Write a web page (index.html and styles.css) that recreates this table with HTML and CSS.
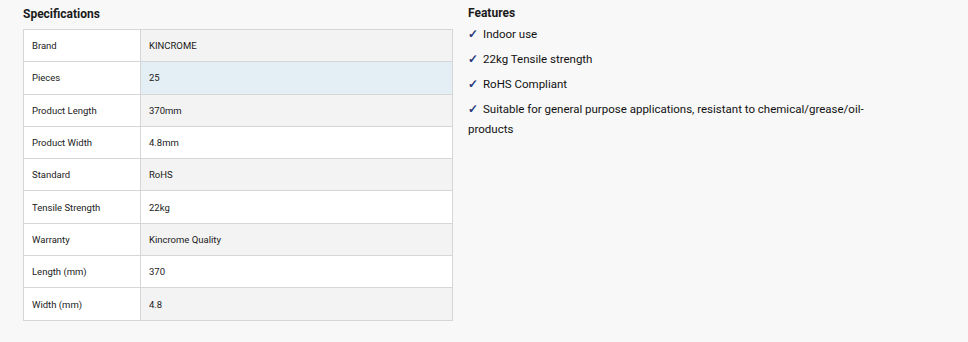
FILE: index.html
```html
<!DOCTYPE html>
<html lang="en">
<head>
    <meta charset="UTF-8" />
    <meta name="viewport" content="width=device-width, initial-scale=1.0" />
    <title>Product Details</title>
    <link rel="stylesheet" href="styles.css">
</head>
<body>
    <div class="details">
        <section class="specs">
            <h3>Specifications</h3>
            <table class="spec-table">
                <tr><td>Brand</td><td>KINCROME</td></tr>
                <tr class="active"><td>Pieces</td><td>25</td></tr>
                <tr><td>Product Length</td><td>370mm</td></tr>
                <tr><td>Product Width</td><td>4.8mm</td></tr>
                <tr><td>Standard</td><td>RoHS</td></tr>
                <tr><td>Tensile Strength</td><td>22kg</td></tr>
                <tr><td>Warranty</td><td>Kincrome Quality</td></tr>
                <tr><td>Length (mm)</td><td>370</td></tr>
                <tr><td>Width (mm)</td><td>4.8</td></tr>
            </table>
        </section>
        <section class="features">
            <h3>Features</h3>
            <ul class="feature-list">
                <li>Indoor use</li>
                <li>22kg Tensile strength</li>
                <li>RoHS Compliant</li>
                <li>Suitable for general purpose applications, resistant to chemical/grease/oil-products</li>
            </ul>
        </section>
    </div>
</body>
</html>
```

FILE: styles.css
```css
:root {
    --background-color: #f8f8f8;
    --stripe-color: #f3f3f3;
    --active-color: #e3eef5;
    --border-color: #d6d6d6;
    --text-color: #1a1a1a;
    --check-color: #25387a;
}

body {
    font-family: Roboto, Arial, sans-serif;
    background-color: var(--background-color);
    color: var(--text-color);
    margin: 0;
    padding: 7px 23px 0;
}

.details {
    display: flex;
    gap: 15px;
}

.specs {
    width: 430px;
}

.features {
    width: 400px;
}

h3 {
    font-size: 12px;
    font-weight: bold;
    margin: 0 0 8px;
    line-height: 14px;
}

.features h3 {
    margin-bottom: 5px;
    line-height: 12px;
}

.spec-table {
    width: 100%;
    border-collapse: collapse;
    font-size: 9.5px;
}

.spec-table td {
    border: 1px solid var(--border-color);
    height: 31.3px;
    padding: 0 8px;
    background-color: white;
}

.spec-table td:first-child {
    width: 100px;
}

.spec-table tr:nth-child(odd) td:last-child {
    background-color: var(--stripe-color);
}

.spec-table tr.active td:last-child {
    background-color: var(--active-color);
}

.feature-list {
    list-style: none;
    margin: 0;
    padding: 0;
    font-size: 11.5px;
    color: #111;
}

.feature-list li {
    line-height: 20px;
    margin-bottom: 5px;
}

.feature-list li::before {
    content: "\2713";
    color: var(--check-color);
    font-weight: bold;
    margin-right: 5px;
}
```
